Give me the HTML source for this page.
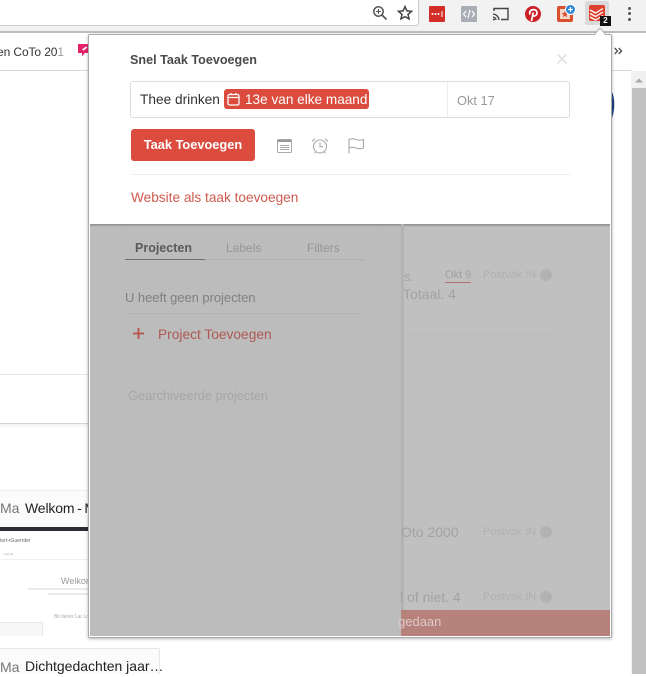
<!DOCTYPE html>
<html><head><meta charset="utf-8">
<style>
html,body{margin:0;padding:0}
body{width:646px;height:674px;overflow:hidden;position:relative;background:#fff;font-family:"Liberation Sans",sans-serif}
.a{position:absolute;white-space:nowrap}
svg{position:absolute;overflow:visible}
</style></head><body>

<!-- toolbar -->
<div class="a" style="left:0;top:0;width:646px;height:32px;background:#f2f2f2"></div>
<div class="a" style="left:0;top:0;width:418px;height:25px;background:#fff;border-right:1px solid #ccc;border-bottom:1px solid #ccc;border-radius:0 0 3px 0"></div>
<div class="a" style="left:0;top:31px;width:646px;height:2px;background:#bdbdbd"></div>
<div class="a" style="left:0;top:33px;width:646px;height:38px;background:#fff"></div>
<div class="a" style="left:0;top:70px;width:632px;height:1px;background:#d8d8d8"></div>

<!-- zoom icon -->
<svg style="left:372px;top:5px" width="16" height="16" viewBox="0 0 16 16"><circle cx="6.500" cy="6.500" r="4.700" fill="none" stroke="#555" stroke-width="1.500"/><path d="M10 10l4.500 4.500" stroke="#555" stroke-width="1.800"/><path d="M4 6.500h5M6.500 4v5" stroke="#555" stroke-width="1.100"/></svg>
<!-- star -->
<svg style="left:397px;top:5px" width="16" height="16" viewBox="0 0 16 16"><path d="M8 1.600l1.900 4.300 4.600.4-3.500 3.100 1.100 4.600L8 11.600l-4.100 2.400 1.100-4.600L1.500 6.300l4.600-.4z" fill="none" stroke="#444" stroke-width="1.500"/></svg>
<!-- lastpass -->
<div class="a" style="left:429px;top:6px;width:16px;height:16px;background:#d32d27;border-radius:1px"></div>
<svg style="left:429px;top:6px" width="16" height="16" viewBox="0 0 16 16"><circle cx="3.500" cy="8" r="1" fill="#fff"/><circle cx="6.500" cy="8" r="1" fill="#fff"/><circle cx="9.500" cy="8" r="1" fill="#fff"/><path d="M13 5v6" stroke="#fff"/></svg>
<!-- code -->
<div class="a" style="left:461px;top:6px;width:16px;height:16px;background:#a9adb5;border-radius:1px"></div>
<svg style="left:461px;top:6px" width="16" height="16" viewBox="0 0 16 16"><path d="M5 5L2.500 8 5 11M11 5l2.500 3L11 11M9 4L7 12" fill="none" stroke="#fff" stroke-width="1.200"/></svg>
<!-- cast -->
<svg style="left:492px;top:6px" width="18" height="16" viewBox="0 0 18 16"><path d="M2 5V2.500h14v11H9" fill="none" stroke="#444" stroke-width="1.400"/><path d="M1 8a6.500 6.500 0 0 1 6 6M1 11a3.500 3.500 0 0 1 3 3" fill="none" stroke="#444" stroke-width="1.300"/><circle cx="1.800" cy="13.500" r="1" fill="#444"/></svg>
<!-- pinterest -->
<div class="a" style="left:525px;top:6px;width:16px;height:16px;background:#cb2027;border-radius:50%"></div>
<svg style="left:525px;top:6px" width="16" height="16" viewBox="0 0 16 16"><path d="M6.500 15L8.200 6.500M5 8.500C3.800 5.500 6 3.600 8.500 3.600c2.500 0 3.900 1.700 3.400 4-.4 2-2.700 3.200-4.200 1.900" fill="none" stroke="#fff" stroke-width="1.700"/></svg>
<!-- bookmark ext -->
<div class="a" style="left:557px;top:6px;width:16px;height:16px;background:#d9502e;border-radius:2px"></div>
<div class="a" style="left:560px;top:9px;width:10px;height:10px;background:#f7d9cc"></div>
<svg style="left:560px;top:9px" width="10" height="10" viewBox="0 0 10 10"><path d="M5 1.500l1 2.500 2.500.2-2 1.600.7 2.500L5 6.900 2.800 8.300l.7-2.500-2-1.600L4 4z" fill="#d9502e"/></svg>
<div class="a" style="left:565px;top:4px;width:9px;height:9px;background:#2b86dc;border-radius:50%;border:1px solid #fff"></div>
<svg style="left:566px;top:5px" width="9" height="9"><path d="M4.500 2v5M2 4.500h5" stroke="#fff" stroke-width="1.200"/></svg>
<!-- todoist active -->
<div class="a" style="left:585px;top:1px;width:24px;height:24px;background:#dadada;border-radius:2px"></div>
<div class="a" style="left:589px;top:5px;width:16px;height:16px;background:#e0402f;border-radius:2px"></div>
<svg style="left:589px;top:5px" width="16" height="16" viewBox="0 0 16 16"><path d="M1 5l5.500 3L14 3.500M1 8.500l5.500 3L14 7M1 12l5.500 3L14 10.500" fill="none" stroke="#fff" stroke-width="1.300"/></svg>
<div class="a" style="left:600px;top:16px;width:11px;height:10px;background:#111;color:#fff;font-size:8px;font-weight:bold;line-height:10px;text-align:center">2</div>
<!-- menu dots -->
<div class="a" style="left:628px;top:7px;width:3px;height:3px;border-radius:50%;background:#555;box-shadow:0 5px 0 #555,0 11px 0 #555"></div>

<!-- bookmarks bar -->
<div class="a" style="left:-3px;top:44px;font-size:12px;color:#333;line-height:16px;letter-spacing:-.1px">en CoTo 20<span style="color:#999">1</span></div>
<svg style="left:77px;top:43px" width="14" height="15" viewBox="0 0 14 15"><path d="M1 1h12v9H8l-3 3.500V10H1z" fill="#e6246c"/><path d="M5 6.500l4-3 1.500 1-4 3z" fill="#fff"/></svg>
<svg style="left:614px;top:47px" width="9" height="8"><path d="M.7 1l2.800 3-2.800 3M4.700 1l2.800 3-2.800 3" fill="none" stroke="#555" stroke-width="1.400"/></svg>

<!-- scrollbar -->
<div class="a" style="left:631px;top:71px;width:15px;height:603px;background:#f1f1f1"></div>
<svg style="left:635px;top:78px" width="8" height="5"><path d="M0 4.500L4 .5l4 4z" fill="#a8a8a8"/></svg>
<div class="a" style="left:632px;top:88px;width:14px;height:586px;background:#c1c1c1"></div>

<!-- page background bits -->
<div class="a" style="left:0;top:374px;width:88px;height:1px;background:#e8e8e8"></div>
<div class="a" style="left:0;top:423px;width:88px;height:1px;background:#d5d5d5"></div>
<div class="a" style="left:0;top:424px;width:88px;height:5px;background:linear-gradient(#f4f4f4,#fff)"></div>
<!-- thumbnail 1 -->
<div class="a" style="left:0;top:490px;width:88px;height:1px;background:#eee"></div>
<div class="a" style="left:0;top:491px;width:88px;height:36px;background:#fbfbfb"></div>
<div class="a" style="left:0;top:498px;font-size:14px;color:#777;line-height:20px">Ma</div>
<div class="a" style="left:25px;top:499px;width:63px;overflow:hidden;font-size:14px;color:#222;line-height:18px;word-spacing:-1px;letter-spacing:-.15px">Welkom - Mijn</div>
<div class="a" style="left:0;top:527px;width:88px;height:4px;background:#2b2d33"></div>
<div class="a" style="left:0;top:531px;width:88px;height:105px;background:#fff"></div>
<div class="a" style="left:0;top:537px;font-size:5px;color:#666;line-height:8px">tort-rGuerrder</div>
<div class="a" style="left:0;top:551px;font-size:3px;color:#aaa;line-height:6px">&nbsp; &nbsp; Tutorial</div>
<div class="a" style="left:0;top:559px;width:88px;height:1px;background:#f1f1f1"></div>
<div class="a" style="left:61px;top:575px;width:27px;overflow:hidden;font-size:9px;color:#999;line-height:12px">Welkom</div>
<div class="a" style="left:28px;top:588px;width:60px;height:2px;background:#eaeaea"></div>
<div class="a" style="left:48px;top:593px;width:40px;height:2px;background:#eaeaea"></div>
<div class="a" style="left:54px;top:613px;width:34px;overflow:hidden;font-size:5px;color:#aaa;line-height:8px">Bli deres Lar Loes</div>
<div class="a" style="left:0;top:622px;width:42px;height:1px;background:#e8e8e8"></div>
<div class="a" style="left:42px;top:622px;width:1px;height:14px;background:#e8e8e8"></div>
<div class="a" style="left:0;top:623px;width:42px;height:13px;background:#f7f7f7"></div>
<!-- card 2 -->
<div class="a" style="left:0;top:648px;width:160px;height:26px;background:#fbfbfb;border-top:1px solid #e6e6e6;border-right:1px solid #e6e6e6;box-sizing:border-box;border-radius:0 2px 0 0"></div>
<div class="a" style="left:0;top:657px;font-size:14px;color:#777;line-height:20px">Ma</div>
<div class="a" style="left:25px;top:657px;font-size:14px;color:#222;line-height:19px">Dichtgedachten jaar…</div>

<!-- popup -->
<div class="a" style="left:88px;top:34px;width:524px;height:604px;background:#fff;border:1px solid #ababab;box-sizing:border-box;box-shadow:0 1px 3px rgba(0,0,0,.3);border-radius:2px;overflow:hidden"></div>
<svg style="left:594px;top:27px" width="12" height="8"><path d="M0 8L6 1l6 7" fill="#fff" stroke="#b0b0b0"/></svg>

<!-- dimmed content -->
<div class="a" style="left:90px;top:224px;width:520px;height:412px;background:#c0c0c0;overflow:hidden">
  <div class="a" style="left:0;top:0;width:520px;height:3px;background:linear-gradient(#8c8c8c,#bdbdbd)"></div>
  <div class="a" style="left:0;top:3px;width:311px;height:409px;background:#bcbcbc"></div>
  <div class="a" style="left:311px;top:0;width:3px;height:412px;background:#b3b3b3"></div>
  <div class="a" style="left:35px;top:35px;width:240px;height:1px;background:#b0b0b0"></div>
  <div class="a" style="left:35px;top:35px;width:80px;height:1px;background:#6e6e6e"></div>
  <div class="a" style="left:45px;top:16px;font-size:12.500px;font-weight:bold;color:#5a5a5a;line-height:16px">Projecten</div>
  <div class="a" style="left:136px;top:16px;font-size:12px;color:#969696;line-height:16px">Labels</div>
  <div class="a" style="left:217px;top:16px;font-size:12px;color:#969696;line-height:16px">Filters</div>
  <div class="a" style="left:35px;top:66px;font-size:13px;color:#808080;line-height:16px;letter-spacing:-.05px">U heeft geen projecten</div>
  <div class="a" style="left:37px;top:89px;width:235px;height:1px;background:#b2b2b2"></div>
  <svg style="left:43px;top:104px" width="11" height="11"><path d="M5.500 0v11M0 5.500h11" stroke="#b5524a" stroke-width="1.800"/></svg>
  <div class="a" style="left:68px;top:102.500px;font-size:13.750px;color:#ae5a52;line-height:16px">Project Toevoegen</div>
  <div class="a" style="left:38px;top:163.500px;font-size:12.800px;color:#a6a6a6;line-height:16px">Gearchiveerde projecten</div>

  <!-- right list -->
  <div class="a" style="left:314px;top:45px;font-size:13px;color:#a2a2a2;line-height:16px">s.</div>
  <div class="a" style="left:355px;top:44px;font-size:11px;color:#a0a0a0;line-height:14px;border-bottom:1px solid #b5736d">Okt 9</div>
  <div class="a" style="left:393px;top:44px;font-size:11px;color:#b0b0b0;line-height:14px">Postvak IN</div>
  <div class="a" style="left:450px;top:45px;width:12px;height:12px;border-radius:50%;background:#b2b2b2"></div>
  <div class="a" style="left:313px;top:62px;font-size:14px;color:#a2a2a2;line-height:16px">Totaal. 4</div>
  <div class="a" style="left:314px;top:110px;width:150px;height:1px;background:#bbb"></div>
  <div class="a" style="left:311px;top:300px;font-size:14px;color:#a2a2a2;line-height:16px">Oto 2000</div>
  <div class="a" style="left:393px;top:301px;font-size:11px;color:#b0b0b0;line-height:14px">Postvak IN</div>
  <div class="a" style="left:450px;top:302px;width:12px;height:12px;border-radius:50%;background:#b2b2b2"></div>
  <div class="a" style="left:310px;top:365px;font-size:14px;color:#a2a2a2;line-height:16px">l of niet. 4</div>
  <div class="a" style="left:393px;top:366px;font-size:11px;color:#b0b0b0;line-height:14px">Postvak IN</div>
  <div class="a" style="left:450px;top:367px;width:12px;height:12px;border-radius:50%;background:#b2b2b2"></div>
  <div class="a" style="left:311px;top:386px;width:209px;height:26px;background:#b7817c"></div>
  <div class="a" style="left:308px;top:390px;font-size:13px;color:#dccbc9;line-height:16px">gedaan</div>
</div>

<!-- popup content -->
<div class="a" style="left:130px;top:52px;font-size:12.600px;font-weight:bold;color:#4a4a4a;line-height:16px">Snel Taak Toevoegen</div>
<svg style="left:557px;top:54px" width="10" height="10"><path d="M.5.500l9 9M9.500.500l-9 9" stroke="#e2e2e2" stroke-width="1.800"/></svg>

<div class="a" style="left:130px;top:81px;width:440px;height:37px;box-sizing:border-box;border:1px solid #dcdcdc;border-radius:3px"></div>
<div class="a" style="left:447px;top:82px;width:1px;height:35px;background:#eee"></div>
<div class="a" style="left:140px;top:91px;font-size:13.700px;color:#333;line-height:17px">Thee drinken</div>
<div class="a" style="left:224px;top:89px;width:145px;height:20px;background:#db4c3f;border-radius:3px"></div>
<svg style="left:227px;top:92px" width="14" height="15" viewBox="0 0 14 15"><rect x="1" y="2.500" width="11" height="10.500" rx="1.500" fill="none" stroke="#fff" stroke-width="1.300"/><path d="M1 5.500h11M4 1v2M9 1v2" stroke="#fff" stroke-width="1.300"/></svg>
<div class="a" style="left:245px;top:91px;font-size:13.600px;color:#fff;line-height:17px">13e van elke maand</div>
<div class="a" style="left:457px;top:93px;font-size:12.800px;color:#999;line-height:16px">Okt 17</div>

<div class="a" style="left:131px;top:129px;width:124px;height:32px;background:#db4c3f;border-radius:3px;color:#fff;font-size:12.800px;font-weight:bold;line-height:32px;text-align:center">Taak Toevoegen</div>

<svg style="left:277px;top:139px" width="15" height="14" viewBox="0 0 15 14"><rect x=".5" y=".5" width="14" height="13" rx="1" fill="none" stroke="#aaa"/><path d="M.5 2h14" stroke="#999" stroke-width="2"/><path d="M3 6.500h9M3 8.500h9M3 10.500h9" stroke="#aaa" stroke-width=".9"/></svg>
<svg style="left:311px;top:137px" width="18" height="17" viewBox="0 0 18 17"><circle cx="9" cy="9.500" r="6.500" fill="none" stroke="#aaa" stroke-width="1.100"/><path d="M9 5.500v4.200h3M1 4.500L4 1.500M17 4.500L14 1.500M4.500 15l-1 1.500M13.500 15l1 1.500" fill="none" stroke="#aaa" stroke-width="1.100"/></svg>
<svg style="left:348px;top:138px" width="17" height="16" viewBox="0 0 17 16"><path d="M1 15.500V1.500c2-1 4-1 7 0s5 1 7.500 0V10c-2.500 1-4.500 1-7.500 0s-5-1-7 0" fill="none" stroke="#aaa" stroke-width="1.100"/></svg>

<div class="a" style="left:131px;top:174px;width:439px;height:1px;background:#eee"></div>
<div class="a" style="left:131px;top:189px;font-size:13.650px;color:#cf5a4e;line-height:17px">Website als taak toevoegen</div>

<!-- blue sliver -->
<svg style="left:612px;top:92px" width="4" height="26"><path d="M0 0c3 6 3 18 0 26z" fill="#1d3c7c"/></svg>

</body></html>
